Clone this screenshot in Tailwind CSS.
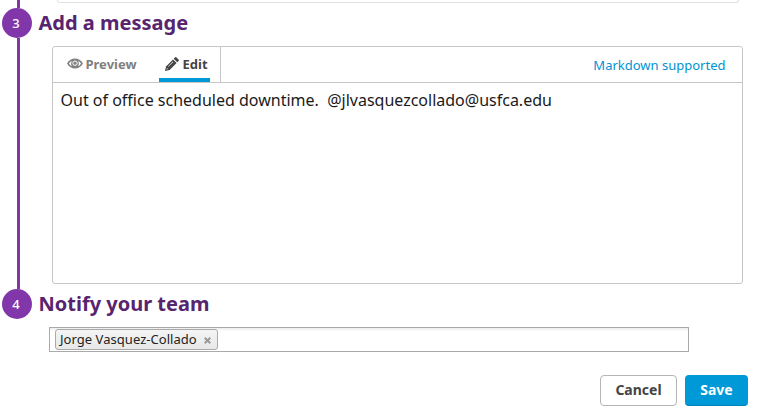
<!DOCTYPE html>
<html lang="en">
<head>
<meta charset="utf-8">
<title>Schedule downtime</title>
<script src="https://cdn.jsdelivr.net/npm/@tailwindcss/browser@4"></script>
</head>
<body class="bg-white h-[411px] overflow-hidden font-['Noto_Sans','Open_Sans',sans-serif] text-[#1a1a1a]">
<main class="flex flex-col h-[411px] w-[759px]">
  <div class="flex h-2 shrink-0">
    <div class="ml-[17px] w-[3px] bg-[#8137a9]"></div>
    <div class="ml-[37px] h-[3px] w-[682px] rounded-b-[3px] border border-t-0 border-[#e2e2e2]"></div>
  </div>

  <section class="flex h-[281px] shrink-0">
    <div class="ml-0.5 flex w-[30px] shrink-0 flex-col">
      <div class="flex size-[30px] shrink-0 items-center justify-center rounded-full bg-[#8137a9] pr-0.5 text-[13px] leading-none font-medium text-white">3</div>
      <div class="ml-[15px] w-[3px] flex-1 bg-[#8137a9]"></div>
    </div>
    <div class="flex flex-col">
      <h2 class="ml-[6.5px] h-[38px] text-[20px] leading-[29px] font-bold whitespace-nowrap text-[#57246f]">Add a message</h2>
      <div class="ml-5 flex h-[238px] w-[691px] flex-col rounded-[3px] border border-[#c6c6c6]">
        <div class="flex h-9 shrink-0 border-b border-[#c6c6c6]">
          <div class="flex w-[168px] border-r border-[#c6c6c6] pl-3.5">
            <div class="flex h-[35px] w-[92px] items-center text-[13px] font-bold text-[#808080]">
              <svg class="mr-[2.500px] mb-0.5 h-[11px] w-4 shrink-0" viewBox="0 0 16 11">
                <path fill="currentColor" d="M0 5.500C2 2.200 4.700.5 8 .5s6 1.700 8 5C14 8.800 11.300 10.500 8 10.500S2 8.800 0 5.500Z"/>
                <path fill="#fff" d="M2 5.500C2.700 4.200 3.600 3.300 4.700 2.700 4 4.500 4 6.500 4.700 8.300 3.600 7.700 2.700 6.800 2 5.500ZM14 5.500C13.300 4.200 12.400 3.300 11.300 2.700 12 4.500 12 6.500 11.300 8.300 12.400 7.700 13.300 6.800 14 5.500Z"/>
                <circle cx="8" cy="5.200" r="2.200" fill="none" stroke="#fff" stroke-width="1"/>
              </svg>
              <span>Preview</span>
            </div>
            <div class="flex h-[35px] w-[51px] items-center border-b-4 border-[#0099d8] pt-1 pl-1.5 text-[13px] font-bold text-[#444]">
              <svg class="mr-[3.500px] mb-0.5 size-[14px] shrink-0" viewBox="0 0 14 14" fill="currentColor">
                <path d="M8.700 1.700 9.900.5q.8-.8 1.600 0L13.500 2.500q.8.8 0 1.600L12.300 5.300ZM8 2.400 11.600 6 4.600 13 0 14 1 9.400ZM1.900 11 1.500 12.500 3 12.100ZM7.900 4.500 3 9.400 3.400 9.800 8.300 4.900Z" fill-rule="evenodd"/>
              </svg>
              <span>Edit</span>
            </div>
          </div>
          <a class="mt-px mr-[16.500px] ml-auto text-[13px] leading-[35px] text-[#0093d3]">Markdown supported</a>
        </div>
        <div class="px-[7.500px] pt-1.5 text-[16px] leading-[23px] whitespace-pre">Out of office scheduled downtime.  @jlvasquezcollado@usfca.edu</div>
      </div>
    </div>
  </section>

  <section class="flex h-[63px] shrink-0">
    <div class="ml-0.5 flex size-[30px] shrink-0 items-center justify-center rounded-full bg-[#8137a9] pr-0.5 text-[13px] leading-none font-medium text-white">4</div>
    <div class="flex flex-col">
      <h2 class="ml-[6.500px] h-[38px] text-[20px] leading-[29px] font-bold whitespace-nowrap text-[#57246f]">Notify your team</h2>
      <div class="ml-[17px] flex h-[25px] w-[640px] border border-[#aaa] bg-linear-to-b from-[#eee] from-1% to-white to-15% pt-px pl-[5px]">
        <div class="flex h-[21px] w-[163px] items-center rounded-[3px] border border-[#aaa] bg-linear-to-b from-[#f4f4f4] to-[#e8e8e8] pl-1 text-[13px] leading-none tracking-[0.04px] whitespace-nowrap text-[#222]">
          <span>Jorge Vasquez-Collado</span>
          <svg class="mt-0.5 mr-1.5 ml-auto size-[7px]" viewBox="0 0 7 7" stroke="#999" stroke-width="2"><path d="M.7.7 6.300 6.300M6.300.7.7 6.300"/></svg>
        </div>
      </div>
    </div>
  </section>

  <footer class="mt-[23px] flex gap-2 pl-[600px] text-[14px] font-bold">
    <button class="h-[31px] w-[77px] rounded-[4px] border border-[#b5b5b5] bg-white pb-0.5 leading-none text-[#444]">Cancel</button>
    <button class="h-[31px] w-[63px] rounded-[4px] border-b border-[#007fb8] bg-[#0099d8] pb-px leading-none text-white">Save</button>
  </footer>
</main>
</body>
</html>
